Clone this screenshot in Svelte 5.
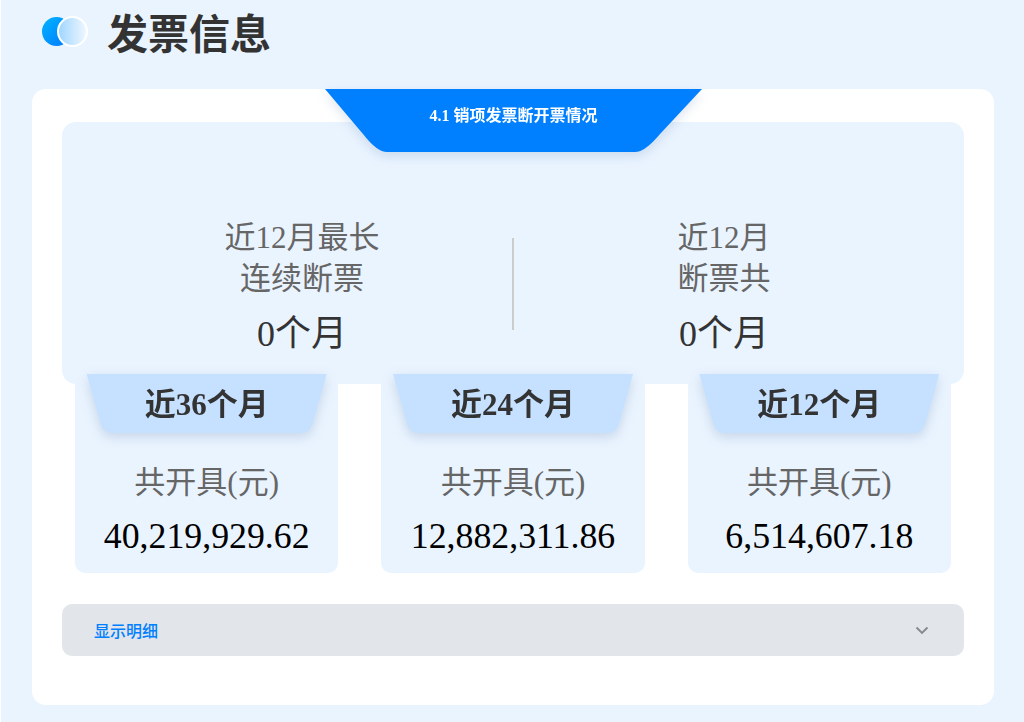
<script>
	const stats = [
		{ label: ['近12月最长', '连续断票'], value: '0个月' },
		{ label: ['近12月', '断票共'], value: '0个月' }
	];
	const periods = [
		{ title: '近36个月', amount: '40,219,929.62' },
		{ title: '近24个月', amount: '12,882,311.86' },
		{ title: '近12个月', amount: '6,514,607.18' }
	];
</script>

<div class="page">
	<header class="head">
		<div class="logo">
			<span class="dot dot-a"></span>
			<span class="dot dot-b"></span>
		</div>
		<h1>发票信息</h1>
	</header>

	<section class="card">
		<div class="ribbon"><span>4.1 销项发票断开票情况</span></div>

		<div class="summary">
			{#each stats as s, i}
				{#if i > 0}<div class="divider"></div>{/if}
				<div class="stat">
					<div class="stat-label">
						{#each s.label as line}<div>{line}</div>{/each}
					</div>
					<div class="stat-value">{s.value}</div>
				</div>
			{/each}
		</div>

		<div class="periods">
			{#each periods as p}
				<div class="period">
					<div class="tab"><div class="tab-shape">{p.title}</div></div>
					<div class="period-label">共开具(元)</div>
					<div class="period-amount">{p.amount}</div>
				</div>
			{/each}
		</div>

		<div class="toggle">
			<span>显示明细</span>
			<svg width="14" height="9" viewBox="0 0 14 9" fill="none">
				<path d="M1.5 1.5 7 7l5.500-5.500" stroke="#85888d" stroke-width="1.800" />
			</svg>
		</div>
	</section>
</div>

<style>
	:global(body) {
		margin: 0;
		background: #fff;
	}
	.page {
		box-sizing: border-box;
		height: 722px;
		margin-left: 1px;
		padding: 0 30px 0 31px;
		background: #eaf4ff;
		font-family: 'Liberation Serif', 'Noto Sans CJK SC', serif;
		overflow: hidden;
	}

	.head {
		display: flex;
		align-items: center;
		height: 63px;
		padding-left: 10px;
	}
	.logo {
		position: relative;
		width: 46px;
		height: 31px;
		margin-right: 19px;
	}
	.dot {
		position: absolute;
		border-radius: 50%;
	}
	.dot-a {
		left: 0;
		top: 1px;
		width: 29px;
		height: 29px;
		background: linear-gradient(135deg, #00b4ff, #0078ff);
	}
	.dot-b {
		box-sizing: border-box;
		left: 15px;
		top: 0;
		width: 31px;
		height: 31px;
		border: 2px solid #fff;
		background: linear-gradient(90deg, #a0d6ff, #eef7ff);
	}
	h1 {
		margin: 0;
		font-family: 'Noto Sans CJK SC', sans-serif;
		font-size: 41px;
		font-weight: 700;
		color: #333;
		line-height: 1;
	}

	.card {
		position: relative;
		box-sizing: border-box;
		height: 616px;
		margin-top: 26px;
		padding: 33px 30px 0;
		background: #fff;
		border-radius: 14px;
	}

	.ribbon {
		position: absolute;
		z-index: 3;
		left: 293px;
		top: 0;
		width: 377px;
		height: 63px;
		filter: drop-shadow(0 4px 6px rgba(40, 90, 150, 0.16));
	}
	.ribbon span {
		display: block;
		height: 100%;
		background: #0080ff;
		clip-path: path('M0 0H377L335 45Q320 63 310 63H62Q52 63 38 45Z');
		color: #fff;
		font-size: 16px;
		font-weight: 700;
		line-height: 54px;
		text-align: center;
	}

	.summary {
		position: relative;
		z-index: 1;
		box-sizing: border-box;
		display: flex;
		align-items: center;
		height: 262px;
		padding: 0 30px;
		background: #eaf4ff;
		border-radius: 14px;
	}
	.stat {
		width: 420px;
		padding-top: 68px;
		text-align: center;
	}
	.stat-label {
		display: inline-block;
		color: #666;
		font-size: 31px;
		line-height: 41px;
		vertical-align: top;
	}
	.stat-value {
		margin-top: 12px;
		color: #333;
		font-size: 36px;
		line-height: 46px;
	}
	.divider {
		flex: none;
		width: 2px;
		height: 92px;
		margin-top: 62px;
		background: #ccc;
	}

	.periods {
		display: grid;
		grid-template-columns: repeat(3, 263.33px);
		column-gap: 43px;
		margin: -10px 13px 0;
	}
	.period {
		position: relative;
		height: 199px;
		background: #eaf4ff;
		border-radius: 0 0 10px 10px;
		text-align: center;
	}
	.tab {
		position: relative;
		z-index: 2;
		width: 240px;
		height: 60px;
		margin: 0 auto;
		filter: drop-shadow(0 4px 6px rgba(40, 80, 130, 0.18));
	}
	.tab-shape {
		height: 59px;
		background: #c5e1ff;
		clip-path: path('M0 0H240L226 50Q223 59 215 59H25Q17 59 14 50Z');
		color: #333;
		font-size: 31px;
		font-weight: 700;
		line-height: 62px;
	}
	.period-label {
		margin-top: 29px;
		color: #666;
		font-size: 31px;
		line-height: 40px;
	}
	.period-amount {
		margin-top: 12px;
		color: #000;
		font-size: 35.800px;
		line-height: 42px;
	}

	.toggle {
		display: flex;
		align-items: center;
		justify-content: space-between;
		height: 52px;
		margin-top: 31px;
		padding: 0 35px 0 32px;
		background: #e2e5e9;
		border-radius: 10px;
		color: #0080ff;
		font-family: 'Noto Sans CJK SC', sans-serif;
		font-size: 16px;
		font-weight: 500;
	}
</style>
